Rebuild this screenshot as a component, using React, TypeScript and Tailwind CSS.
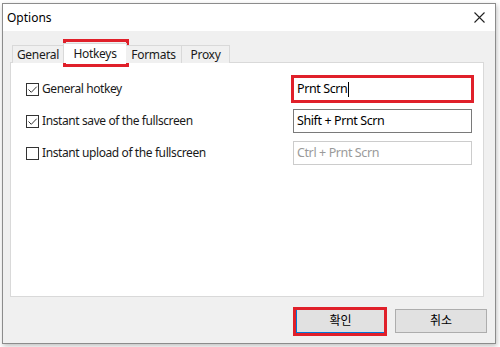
const font = "font-['Noto_Sans','Noto_Sans_CJK_KR',sans-serif]";

function Check({ checked }: { checked: boolean }) {
  return (
    <span className="flex h-[13px] w-[13px] shrink-0 items-center justify-center border border-[#333] bg-white">
      {checked && (
        <svg width="11" height="11" viewBox="0 0 11 11">
          <path d="M1.5 5.5 L4.3 8.3 L9.7 2.7" fill="none" stroke="#333" strokeWidth="1" />
        </svg>
      )}
    </span>
  );
}

const tabBase =
  "flex h-[18px] items-center justify-center border border-b-0 border-[#d9d9d9] bg-[#f0f0f0] text-[12px] tracking-[-0.3px] text-[#1a1a1a]";
const labelCls = "flex items-center gap-[3px] text-[12px] tracking-[-0.4px] text-[#1a1a1a]";
const inputCls = "flex h-[24px] w-[179px] items-center border px-[3px] text-[12.5px] tracking-[-0.4px]";

export default function App() {
  return (
    <div className={`h-[347px] w-[500px] bg-white pl-[2px] pt-[3px] ${font}`}>
      <div className="relative flex h-[341px] w-[494px] flex-col border border-[#8c8c8c] bg-[#f0f0f0] shadow-[1px_2px_5px_rgba(0,0,0,0.25)]">
        {/* title bar */}
        <div className="flex h-[27px] items-center justify-between bg-white pl-[4px] pr-[10px]">
          <span className="text-[12px] text-black">Options</span>
          <svg width="11" height="11" viewBox="0 0 11 11">
            <path d="M0.5 0.5 L10.5 10.5 M10.5 0.5 L0.5 10.5" stroke="#222" strokeWidth="1.1" />
          </svg>
        </div>

        <div className="flex flex-1 flex-col pl-[7px] pr-[10px] pt-[12px]">
          {/* tabs */}
          <div className="relative z-10 flex h-[20px] items-end pl-[2px]">
            <div className={`${tabBase} w-[52px]`}>General</div>
            <div className="-mx-[1px] flex h-[20px] w-[64px] items-center justify-center border border-b-0 border-[#d9d9d9] bg-white text-[12px] tracking-[-0.3px] text-[#1a1a1a]">
              Hotkeys
            </div>
            <div className={`${tabBase} w-[56px] border-l-0`}>Formats</div>
            <div className={`${tabBase} w-[48px] border-l-0`}>Proxy</div>
          </div>

          {/* panel */}
          <div className="-mt-[1px] flex h-[235px] w-[474px] flex-col gap-[8px] border border-[#d9d9d9] bg-white pl-[15px] pr-[11px] pt-[14px]">
            <div className="flex h-[24px] items-center justify-between">
              <label className={labelCls}>
                <Check checked />
                General hotkey
              </label>
              <div className={`${inputCls} border-[#7a7a7a] text-black`}>
                Prnt Scrn<span className="ml-[1px] h-[15px] w-px bg-black" />
              </div>
            </div>
            <div className="flex h-[24px] items-center justify-between">
              <label className={labelCls}>
                <Check checked />
                Instant save of the fullscreen
              </label>
              <div className={`${inputCls} border-[#7a7a7a] text-black`}>Shift + Prnt Scrn</div>
            </div>
            <div className="flex h-[24px] items-center justify-between">
              <label className={labelCls}>
                <Check checked={false} />
                Instant upload of the fullscreen
              </label>
              <div className={`${inputCls} border-[#cccccc] text-[#9a9a9a]`}>Ctrl + Prnt Scrn</div>
            </div>
          </div>

          {/* buttons */}
          <div className="mt-[12px] flex justify-end gap-[10px]">
            <button className="h-[24px] w-[89px] border border-[#0078d7] bg-[#e1e1e1] text-[12px] text-black">
              확인
            </button>
            <button className="-mr-[2px] h-[24px] w-[92px] border border-[#adadad] bg-[#e1e1e1] text-[12px] text-black">
              취소
            </button>
          </div>
        </div>

        {/* red annotation boxes */}
        <div className="pointer-events-none absolute left-[60px] top-[35px] h-[28px] w-[66px] border-[3px] border-[#e0202a]" />
        <div className="pointer-events-none absolute left-[288px] top-[71px] h-[28px] w-[183px] border-[3px] border-[#e0202a]" />
        <div className="pointer-events-none absolute left-[290px] top-[303px] h-[29px] w-[94px] border-[3px] border-[#e0202a]" />
      </div>
    </div>
  );
}
